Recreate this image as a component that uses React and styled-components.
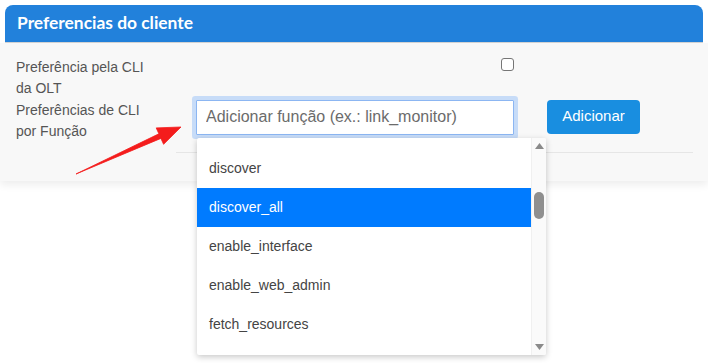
import React from "react";
import styled, { createGlobalStyle } from "styled-components";

const Global = createGlobalStyle`
  html, body { margin: 0; padding: 0; background: #ffffff; }
  body { font-family: "Liberation Sans", Arial, sans-serif; }
  * { box-sizing: border-box; }
`;

const Page = styled.div`
  position: relative;
  width: 708px;
  height: 363px;
  padding-top: 5px;
  overflow: hidden;
`;

const Header = styled.div`
  margin: 0 5px;
  height: 38px;
  background: #2281db;
  border-radius: 8px 8px 0 0;
  border-bottom: 1px solid #d4d4d4;
  display: flex;
  align-items: center;
  padding: 0 12px 2px;
  color: #ffffff;
  font-family: Lato, "Open Sans", sans-serif;
  font-weight: 700;
  font-size: 17.4px;
`;

const Body = styled.div`
  height: 138px;
  background: #f8f8f8;
  box-shadow: 0 4px 8px rgba(0, 0, 0, 0.07);
  padding: 14px 0 0 16px;
  display: flex;
  flex-direction: column;
`;

const FormRow = styled.div`
  display: grid;
  grid-template-columns: 180px 1fr;
  align-items: start;
`;

const Label = styled.div`
  width: 140px;
  font-size: 14px;
  line-height: 21.3px;
  color: #555555;
`;

const CheckCell = styled.div`
  width: 318px;
  display: flex;
  justify-content: flex-end;
  padding-top: 1px;
`;

const Check = styled.input`
  appearance: none;
  margin: 0;
  width: 13px;
  height: 13px;
  border: 1px solid #767676;
  border-radius: 3px;
  background: #ffffff;
`;

const Controls = styled.div`
  position: relative;
  display: flex;
  align-items: flex-start;
  gap: 33px;
`;

const Input = styled.input`
  width: 318px;
  height: 35px;
  margin: 0;
  border: 1px solid #8cb6f2;
  border-radius: 1px;
  box-shadow: 0 0 0 4px #c7dcf8;
  background: #ffffff;
  padding: 0 9px;
  font-family: "Liberation Sans", Arial, sans-serif;
  font-size: 16px;
  color: #333;
  outline: none;
  &::placeholder { color: #6b6b6b; }
`;

const Button = styled.button`
  width: 93px;
  height: 34px;
  border: none;
  border-radius: 4px;
  background: #198ee0;
  color: #ffffff;
  font-family: "Liberation Sans", Arial, sans-serif;
  font-size: 15px;
  padding: 0 0 2px;
`;

const Divider = styled.div`
  margin: 10px 15px 0 160px;
  height: 1px;
  background: #e6e6e6;
`;

const Dropdown = styled.div`
  position: absolute;
  left: 1px;
  top: 38px;
  width: 349px;
  height: 217px;
  background: #ffffff;
  box-shadow: 0 2px 6px rgba(0, 0, 0, 0.22);
  border-radius: 2px;
  display: flex;
  overflow: hidden;
  z-index: 5;
`;

const List = styled.ul`
  list-style: none;
  margin: 0;
  padding: 11px 0 0;
  flex: 1;
`;

const Item = styled.li`
  height: 39px;
  display: flex;
  align-items: center;
  padding: 0 12px;
  font-size: 14px;
  color: ${(p) => (p.$active ? "#ffffff" : "#444444")};
  background: ${(p) => (p.$active ? "#007bff" : "transparent")};
`;

const Scrollbar = styled.div`
  width: 15px;
  background: #fafafa;
  border-left: 1px solid #f0f0f0;
  display: flex;
  flex-direction: column;
  align-items: center;
  justify-content: space-between;
  padding: 5px 0 5px;
  position: relative;
`;

const Thumb = styled.div`
  position: absolute;
  left: 2px;
  top: 54px;
  width: 10px;
  height: 27px;
  border-radius: 5px;
  background: #8f8f8f;
`;

const ArrowSvg = styled.svg`
  position: absolute;
  left: 0;
  top: 0;
  pointer-events: none;
  z-index: 10;
`;

const items = ["discover", "discover_all", "enable_interface", "enable_web_admin", "fetch_resources"];

export default function App() {
  return (
    <Page>
      <Global />
      <Header>Preferencias do cliente</Header>
      <Body>
        <FormRow>
          <Label>Preferência pela CLI da OLT</Label>
          <CheckCell>
            <Check type="checkbox" />
          </CheckCell>
        </FormRow>
        <FormRow>
          <Label>Preferências de CLI por Função</Label>
          <Controls>
            <Input placeholder="Adicionar função (ex.: link_monitor)" />
            <Button>Adicionar</Button>
            <Dropdown>
              <List>
                {items.map((it) => (
                  <Item key={it} $active={it === "discover_all"}>
                    {it}
                  </Item>
                ))}
              </List>
              <Scrollbar>
                <svg width="9" height="6" viewBox="0 0 9 6">
                  <path d="M4.5 0 L9 6 L0 6 Z" fill="#8a8a8a" />
                </svg>
                <Thumb />
                <svg width="9" height="6" viewBox="0 0 9 6">
                  <path d="M0 0 L9 0 L4.5 6 Z" fill="#8a8a8a" />
                </svg>
              </Scrollbar>
            </Dropdown>
          </Controls>
        </FormRow>
        <Divider />
      </Body>
      <ArrowSvg width="708" height="363" viewBox="0 0 708 363">
        <path
          d="M76 174 L158.9 133.8 L156.2 127.9 L181 127 L163.6 144.3 L160.9 138.4 Z"
          fill="#f41c1c"
          stroke="#f41c1c"
          strokeWidth="0.8"
          strokeLinejoin="round"
        />
      </ArrowSvg>
    </Page>
  );
}
